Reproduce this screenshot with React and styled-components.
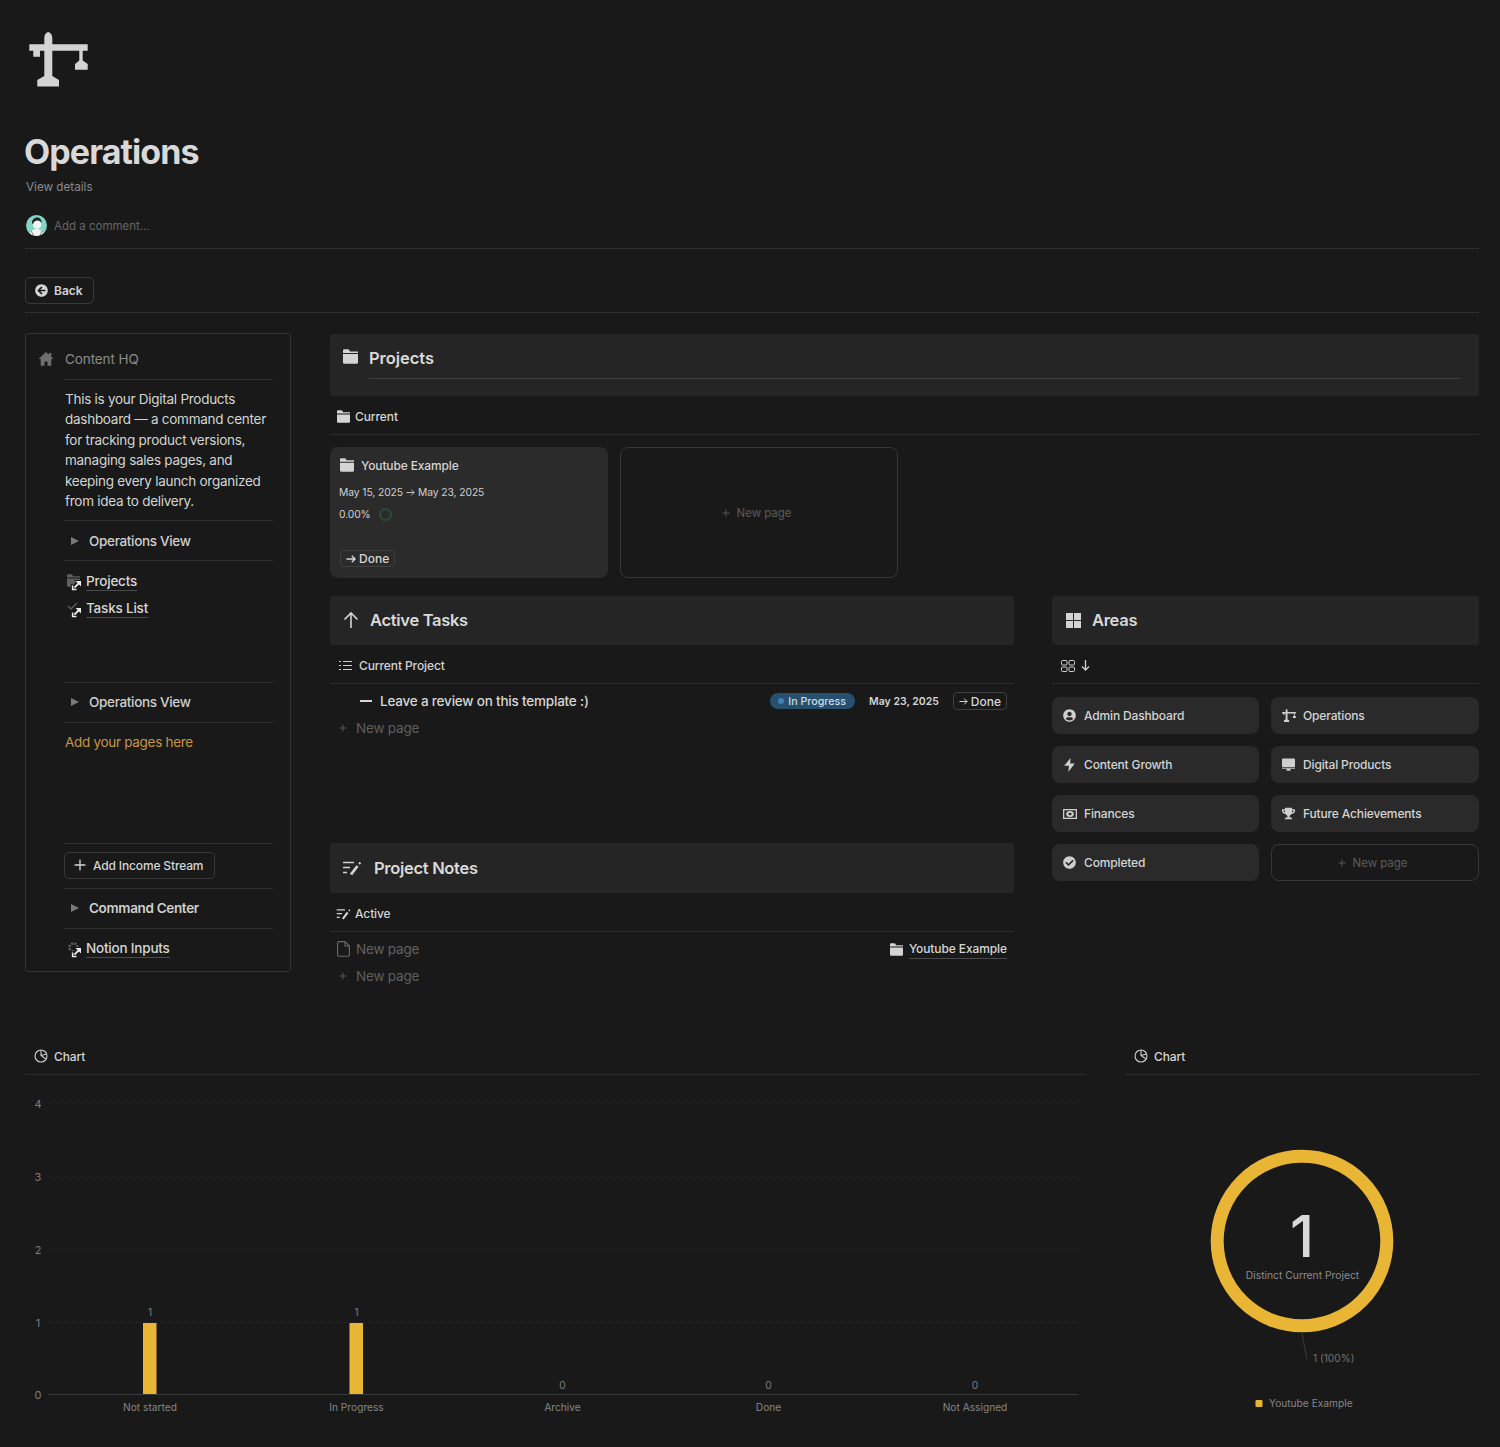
import React from "react";
import styled, { createGlobalStyle } from "styled-components";
import { FaUserCircle, FaTrophy, FaCheckCircle, FaArrowCircleLeft } from "react-icons/fa";

const GOLD = "#e8b534";
const Global = createGlobalStyle`
  html, body { margin: 0; padding: 0; background: #191919; }
  body { font-family: Inter, "Liberation Sans", sans-serif; color: #d4d4d4; -webkit-font-smoothing: antialiased; }
  * { box-sizing: border-box; }
`;

const Page = styled.div`height: 1447px; padding: 32px 21px 0 25px; overflow: hidden;`;
const Crane = styled.svg`display: block; margin-left: ${p => p.$ml ?? 4}px; width: ${p => p.$w || 59}px; height: ${p => p.$h || 55}px; fill: ${p => p.$c || "#d3d3d3"}; flex: none;`;
const Title = styled.h1`margin: 44px 0 0 -1px; font-size: 34px; line-height: 42px; font-weight: 700; color: #d9d9d9; letter-spacing: -0.9px;`;
const Details = styled.div`margin: 6px 0 0 1px; font-size: 11.7px; line-height: 16px; color: #8b8b8b;`;
const CommentRow = styled.div`display: flex; align-items: center; gap: 7px; height: 24px; margin: 18px 0 0 1px; font-size: 11.5px; color: #666;`;
const CommentText = styled.span`margin-top: 2px;`;
const Rule = styled.div`height: 1px; background: #2f2f2f; margin-top: ${p => p.$t}px;`;
const BackButton = styled.div`
  display: flex; align-items: center; gap: 6px; width: 69px; height: 27px; margin-top: 28px; padding-left: 9px;
  border: 1px solid #383838; border-radius: 5px; font-size: 12px; font-weight: 600; color: #d4d4d4;
`;
const Body = styled.div`display: grid; grid-template-columns: 266px 1149px; column-gap: 39px; margin-top: 20px;`;

const Sidebar = styled.aside`height: 639px; padding: 0 17px 0 38px; border: 1px solid #343434; border-radius: 3px;`;
const SideHead = styled.div`display: flex; align-items: center; height: 45px; margin-left: -26px; gap: 11px; font-size: 13.5px; letter-spacing: -0.1px; color: #8b8b8b; padding-top: 4px;`;
const SideSection = styled.div`
  height: ${p => p.$h}px; border-top: 1px solid #2f2f2f;
  display: flex; flex-direction: column; justify-content: ${p => p.$top ? "flex-start" : "center"};
  padding-top: ${p => p.$pt || 0}px; padding-bottom: ${p => p.$pb || 0}px;
`;
const SideText = styled.p`margin: 0; padding-left: 1px; font-size: 13.5px; line-height: 20.4px; color: #d4d4d4; letter-spacing: -0.27px;`;
const Toggle = styled.div`display: flex; align-items: center; gap: 10px; padding-left: 7px; font-size: 13.5px; font-weight: ${p => p.$strong ? 600 : 500}; color: #cfcfcf; letter-spacing: -0.33px;`;
const Caret = styled.span`width: 0; height: 0; border-left: 8px solid #7a7a7a; border-top: 4.5px solid transparent; border-bottom: 4.5px solid transparent;`;
const Linked = styled.div`display: flex; align-items: center; height: 27px; gap: 3px; padding-left: 3px; font-size: 13.5px; font-weight: 500; color: #d6d6d6; letter-spacing: -0.2px;`;
const LinkIcon = styled.span`position: relative; display: block; width: 16px; height: 16px; flex: none; color: #5f5f5f;`;
const LinkBadge = styled.svg`position: absolute; right: 1px; bottom: -1px; width: 11px; height: 11px;`;
const Under = styled.span`border-bottom: 1px solid #4a4a4a; line-height: 18px;`;
const Accent = styled.div`padding-left: 1px; font-size: 13.5px; color: #c8953f; letter-spacing: -0.3px;`;
const AddButton = styled.div`
  display: flex; align-items: center; gap: 7px; width: 151px; height: 27px; padding-left: 9px;
  border: 1px solid #383838; border-radius: 5px; font-size: 12px; font-weight: 500; letter-spacing: -0.15px; color: #d4d4d4;
`;

const Main = styled.main`padding-top: 1px; min-width: 0;`;
const Banner = styled.div`display: flex; height: ${p => p.$h}px; padding: 0 18px ${p => p.$pb || 0}px ${p => p.$pl || 13}px; background: #252525; border-radius: 3px; gap: ${p => p.$gap || 11}px; align-items: ${p => p.$top ? "flex-start" : "center"};`;
const BannerTitle = styled.h2`margin: 0; font-size: 16.5px; font-weight: 600; color: #d9d9d9; letter-spacing: -0.3px;`;
const ProjectsTitle = styled(BannerTitle)`letter-spacing: -0.05px;`;
const BannerColumn = styled.div`flex: 1; height: 45px; display: flex; align-items: center; padding-top: 3px; border-bottom: 1px solid #3d3d3d;`;
const BannerIcon = styled.span`display: flex; flex: none; height: 45px; align-items: center; color: #d4d4d4;`;
const TabBar = styled.div`
  display: flex; align-items: center; gap: ${p => p.$gap || 5}px; height: 39px; padding: ${p => p.$pt ?? 3}px 0 0 ${p => p.$pl || 7}px;
  border-bottom: 1px solid #2c2c2c; font-size: 12px; font-weight: 500; letter-spacing: -0.1px; color: #d4d4d4;
`;
const Cards = styled.div`display: flex; gap: 12px; margin-top: 12px;`;
const ProjectCard = styled.div`
  width: 278px; height: 131px; padding: 9px 9px 11px; background: #2b2b2b; border-radius: 8px;
  display: flex; flex-direction: column; align-items: flex-start;
`;
const CardTitle = styled.div`display: flex; align-items: center; gap: 7px; height: 18px; padding-left: 1px; font-size: 12px; font-weight: 500; letter-spacing: -0.13px; color: #d4d4d4;`;
const CardLine = styled.div`display: flex; align-items: center; gap: ${p => p.$gap}px; margin-top: ${p => p.$t}px; font-size: 10.3px; letter-spacing: -0.08px; line-height: 16px; color: #d0d0d0;`;
const Ring = styled.span`width: 13px; height: 13px; border: 2.5px solid #2d4a39; border-radius: 50%;`;
const DoneTag = styled.div`
  display: flex; align-items: center; gap: 3px; height: ${p => p.$h || 17}px; padding: 0 5px; margin-top: ${p => p.$auto ? "auto" : 0};
  margin-left: ${p => p.$auto ? "1px" : 0}; border: 1px solid #3f3f3f; border-radius: 4px; font-size: 12px; font-weight: 500; color: #d6d6d6; flex: none;
`;
const GhostCard = styled.div`
  width: ${p => p.$w ? p.$w + "px" : "auto"}; height: ${p => p.$h}px; display: flex; align-items: center; justify-content: center; gap: 7px; padding: 1px 5px 0 0;
  border: 1px solid #373737; border-radius: 8px; font-size: 11.5px; letter-spacing: -0.05px; color: #5b5b5b;
`;
const Split = styled.div`display: grid; grid-template-columns: 684px 427px; column-gap: 38px; margin-top: 18px;`;
const LeftStack = styled.div`height: 247px;`;
const TaskRow = styled.div`display: flex; align-items: center; height: 35px; padding: 0 7px 1px 30px; font-size: 13.5px; font-weight: 500; color: #d6d6d6;`;
const Dash = styled.span`width: 12px; height: 2px; background: #d6d6d6; margin-right: 8px; flex: none;`;
const TaskName = styled.span`flex: 1; letter-spacing: -0.2px;`;
const Pill = styled.span`display: flex; align-items: center; gap: 4px; height: 16px; padding: 0 9px 0 8px; border-radius: 8px; background: #27506f; font-size: 10.7px; font-weight: 500; color: #cfdce6;`;
const Dot = styled.span`width: 6px; height: 6px; border-radius: 50%; background: #3d82b5;`;
const DateText = styled.span`margin: 0 14px; font-size: 10.5px; font-weight: 600; color: #d4d4d4;`;
const NewRow = styled.div`display: flex; align-items: center; gap: 9px; height: 18px; padding-left: 9px; font-size: 13.5px; letter-spacing: -0.2px; color: #5f5f5f;`;
const NoteRow = styled.div`display: flex; align-items: center; justify-content: space-between; height: 35px; padding: 0 7px 1px;`;
const NoteStart = styled.div`display: flex; align-items: center; gap: 6px; font-size: 13.5px; letter-spacing: -0.2px; color: #626262;`;
const NoteEnd = styled.div`display: flex; align-items: center; gap: 6px; font-size: 12px; font-weight: 500; letter-spacing: -0.1px; color: #d6d6d6;`;
const AreaGrid = styled.div`display: grid; grid-template-columns: 207px 208px; gap: 12px; margin-top: 13px;`;
const AreaCard = styled.div`display: flex; align-items: center; gap: 8px; height: 37px; padding-left: 11px; background: #2a2a2a; border-radius: 8px; font-size: 12px; font-weight: 500; letter-spacing: -0.15px; color: #d4d4d4;`;
const AreaIcon = styled.span`display: flex; justify-content: center; width: 13px; flex: none; color: #cfcfcf;`;
const Charts = styled.div`display: grid; grid-template-columns: 1061px 354px; column-gap: 39px; margin-top: 51px;`;
const ChartPanel = styled.section`min-width: 0;`;
const ChartSvg = styled.svg`display: block; width: 100%; height: 350px; font-family: Inter, "Liberation Sans", sans-serif;`;

const Folder = ({ s = 15, c = "#d4d4d4" }) => (
  <svg width={s} height={s} viewBox="1.5 2 13 12.600" fill={c} style={{ flex: "none" }}><path d="M1.500 3.200C1.500 2.500 2 2 2.700 2h3.200c.4 0 .7.2.9.500L7.600 4H14.500v1.200H1.500z"/><path d="M1.500 6.200h13v7c0 .9-.6 1.400-1.400 1.400H2.900c-.8 0-1.400-.5-1.400-1.400z"/></svg>
);
const Home = () => (
  <svg width="16" height="16" viewBox="0 0 16 16" fill="#6f6f6f"><path d="M8 1 .5 8h2.200v6.800h3.800v-4.300h3v4.300h3.800V8h2.200l-2.200-2.100V2h-2.400v1.700z"/></svg>
);
const CranePath = "M44.300 44.300V38Q44.500 33 48.200 32 52 33 52.300 38V44.300H87.700V50.700H82.700V60.500L87.700 64V69.700H75V64L79.300 60.500V50.700H52.300V76L59 80V86.500H37.300V80L44.300 76V50.700H40V56.700H33.300V50.700H29.300V44.300Z";
const Plus = ({ s = 10, c = "#5f5f5f", w = 1 }) => (
  <svg width={s} height={s} viewBox="0 0 10 10" stroke={c} strokeWidth={w} style={{ flex: "none" }}><path d="M5 .5v9M.5 5h9"/></svg>
);
const Arrow = ({ s = 10, c = "#d6d6d6", w = 1.400 }) => (
  <svg width={s} height={s} viewBox="0 0 10 10" fill="none" stroke={c} strokeWidth={w} style={{ flex: "none" }}><path d="M.5 5h8.500M5.800 1.800 9 5 5.800 8.200"/></svg>
);
const Notes = ({ s = 20, c = "#d4d4d4" }) => (
  <svg width={s} height={s * 0.8} viewBox="0 0 20 16" fill="none" stroke={c} strokeWidth="1.700" style={{ flex: "none" }}><path d="M1 2.500h11M1 7.500h7M1 12.500h4"/><path d="M9 14.500 15.500 6" strokeWidth="2.800"/><path d="M17 2.500l1.500 1.500" strokeWidth="2"/></svg>
);
const Pie = () => (
  <svg width="14" height="14" viewBox="0 0 14 14" fill="none" stroke="#cfcfcf" strokeWidth="1.100" style={{ flex: "none" }}><circle cx="7" cy="7" r="6"/><path d="M7 1v5.500l4.600 3.200M7 6.500 12.600 5"/></svg>
);
const Badge = () => (
  <LinkBadge viewBox="0 0 11 11"><path d="M0 4v7h7V9.500L8 9l1 1 2-2V0H3l2 2-3 3L1 4z" fill="#191919"/><path d="M1.600 5.500v3.900h3.900" fill="none" stroke="#ececec" strokeWidth="1.500"/><path d="M3.400 7.600 8 3" fill="none" stroke="#ececec" strokeWidth="1.800"/><path d="M4.500 1h5.500v5.500z" fill="#ececec"/></LinkBadge>
);
const Avatar = () => (
  <svg width="21" height="21" viewBox="0 0 21 21" style={{ flex: "none" }}><defs><clipPath id="av"><circle cx="10.500" cy="10.500" r="10.500"/></clipPath></defs><g clipPath="url(#av)"><rect width="21" height="21" fill="#7fd6c6"/><path d="M3 21c.5-5 4-7 7.500-7s7 2 7.500 7z" fill="#f2f2f2"/><circle cx="11" cy="9.500" r="4.300" fill="#f4f4f4"/><path d="M6 8c0-4 3-5.500 5.500-5.500S16 5 15.500 8c-1-2-3-2.500-4.500-2.500S7.500 6.500 7 9.500z" fill="#222"/><path d="M5 16l3 5M16 16l-2 5" stroke="#333" strokeWidth=".6"/></g></svg>
);
const Squares = () => (
  <svg width="15" height="15" viewBox="0 0 15 15" fill="#d4d4d4" style={{ flex: "none" }}><rect width="7" height="7"/><rect x="8" width="7" height="7"/><rect y="8" width="7" height="7"/><rect x="8" y="8" width="7" height="7"/></svg>
);
const ListIcon = () => (
  <svg width="13" height="11" viewBox="0 0 13 11" fill="none" stroke="#cfcfcf" strokeWidth="1.100"><path d="M0 1.500h2M0 5.500h2M0 9.500h2M4 1.500h9M4 5.500h9M4 9.500h9"/></svg>
);
const FileIcon = () => (
  <svg width="13" height="16" viewBox="0 0 13 16" fill="none" stroke="#6a6a6a" strokeWidth="1.100"><path d="M1.800.6H8L12.400 5v8.500c0 1-.7 1.800-1.700 1.800H2.300c-1 0-1.700-.8-1.700-1.800V2c0-.8.500-1.400 1.200-1.400zM8 .6V5h4.400"/></svg>
);
const OutlineGrid = () => (
  <svg width="14" height="12" viewBox="0 0 14 12" fill="none" stroke="#cfcfcf" strokeWidth="1"><rect x=".5" y=".5" width="5.500" height="4.500" rx="1"/><rect x="8" y=".5" width="5.500" height="4.500" rx="1"/><rect x=".5" y="7" width="5.500" height="4.500" rx="1"/><rect x="8" y="7" width="5.500" height="4.500" rx="1"/></svg>
);
const Monitor = () => (
  <svg width="13" height="13" viewBox="0 0 13 13" fill="#cfcfcf" style={{ flex: "none" }}><rect y=".5" width="13" height="8.500" rx=".8"/><rect y="9.700" width="13" height="1"/><rect x="4.500" y="10.700" width="4" height="2"/></svg>
);
const Bolt = () => (
  <svg width="11" height="14" viewBox="0 0 11 14" fill="#cfcfcf" style={{ flex: "none" }}><path d="M6.500 0 .2 7.800H5L4.300 14 10.800 5.500H6.200z"/></svg>
);
const Bill = () => (
  <svg width="14" height="10" viewBox="0 0 14 10" fill="none" style={{ flex: "none" }}><rect width="14" height="10" fill="#cfcfcf"/><rect x="1.300" y="1.300" width="11.400" height="7.400" fill="#2a2a2a"/><ellipse cx="7" cy="5" rx="3.800" ry="3" fill="#cfcfcf"/><ellipse cx="7" cy="5" rx="1.600" ry="1.300" fill="#2a2a2a"/></svg>
);

const areas = [
  ["Admin Dashboard", <FaUserCircle size={13} />],
  ["Operations", <Crane viewBox="29 32 59 55" $w={14} $h={13} $c="#cfcfcf" $ml={0}><path d={CranePath} /></Crane>],
  ["Content Growth", <Bolt />],
  ["Digital Products", <Monitor />],
  ["Finances", <Bill />],
  ["Future Achievements", <FaTrophy size={13} />],
  ["Completed", <FaCheckCircle size={13} />],
];

const Y0 = 1075;
const yTicks = [[4, 1103], [3, 1176], [2, 1249], [1, 1322]];
const cats = [["Not started", 125, 1], ["In Progress", 331.500, 1], ["Archive", 537.500, 0], ["Done", 743.500, 0], ["Not Assigned", 950, 0]];

const BarChart = () => (
  <ChartSvg viewBox="0 0 1061 350">
    {yTicks.map(([n, y]) => (
      <g key={n}>
        <line x1="23" x2="1053" y1={y - Y0 + .5} y2={y - Y0 + .5} stroke="#2f2f2f" strokeDasharray="1 3" />
        <text x="13" y={y - Y0 + 4.500} fontSize="11" fill="#7d7d7d" textAnchor="middle">{n}</text>
      </g>
    ))}
    <text x="13" y={319 + 4.500} fontSize="11" fill="#7d7d7d" textAnchor="middle">0</text>
    <line x1="23" x2="1053" y1="319.500" y2="319.500" stroke="#3a3a3a" />
    {cats.map(([name, x, v]) => (
      <g key={name}>
        {v > 0 && <rect x={x - 7} y="248" width="13.500" height="71" fill={GOLD} />}
        <text x={x} y={v > 0 ? 241 : 314} fontSize="10.200" fill="#7d7d7d" textAnchor="middle">{v}</text>
        <text x={x} y="336" fontSize="10.200" fill="#858585" textAnchor="middle">{name}</text>
      </g>
    ))}
  </ChartSvg>
);

const Donut = () => (
  <ChartSvg viewBox="0 0 354 350">
    <circle cx="177" cy="166" r="84.800" fill="none" stroke={GOLD} strokeWidth="13" />
    <text x="177" y="182" fontSize="58" fontWeight="500" fill="#d9d9d9" textAnchor="middle">1</text>
    <text x="177.500" y="204" fontSize="10.300" fill="#8b8b8b" textAnchor="middle">Distinct Current Project</text>
    <path d="M177 258 182 284" stroke="#3d3d3d" fill="none" />
    <text x="188" y="287" fontSize="10.200" fill="#717171">1 (100%)</text>
    <rect x="130.500" y="325" width="7" height="7" rx="1" fill={GOLD} />
    <text x="144" y="332" fontSize="10.200" fill="#858585">Youtube Example</text>
  </ChartSvg>
);

export default function App() {
  return (
    <Page>
      <Global />
      <Crane viewBox="29 32 59 55"><path d={CranePath} /></Crane>
      <Title>Operations</Title>
      <Details>View details</Details>
      <CommentRow><Avatar /><CommentText>Add a comment...</CommentText></CommentRow>
      <Rule $t={11} />
      <BackButton><FaArrowCircleLeft size={13} />Back</BackButton>
      <Rule $t={8} />
      <Body>
        <Sidebar>
          <SideHead><Home />Content HQ</SideHead>
          <SideSection $h={141} $top $pt={9}>
            <SideText>This is your Digital Products dashboard — a command center for tracking product versions, managing sales pages, and keeping every launch organized from idea to delivery.</SideText>
          </SideSection>
          <SideSection $h={40}><Toggle><Caret />Operations View</Toggle></SideSection>
          <SideSection $h={122} $top $pt={7}>
            <Linked><LinkIcon><Folder s={13} c="#5f5f5f" /><Badge /></LinkIcon><Under>Projects</Under></Linked>
            <Linked><LinkIcon><svg width="14" height="14" viewBox="0 0 14 14" fill="none" stroke="#5f5f5f" strokeWidth="1.400"><path d="M1 5l3 3 6-6" /></svg><Badge /></LinkIcon><Under>Tasks List</Under></Linked>
          </SideSection>
          <SideSection $h={40} $pb={1}><Toggle><Caret />Operations View</Toggle></SideSection>
          <SideSection $h={121} $top $pt={11}><Accent>Add your pages here</Accent></SideSection>
          <SideSection $h={45} $pb={2}><AddButton><Plus s={12} c="#d4d4d4" w={1.100} />Add Income Stream</AddButton></SideSection>
          <SideSection $h={40} $pb={1}><Toggle $strong><Caret />Command Center</Toggle></SideSection>
          <SideSection $h={43} $top $pt={6}>
            <Linked><LinkIcon><svg width="14" height="14" viewBox="0 0 14 14" fill="none" stroke="#5f5f5f" strokeWidth="2.600" strokeDasharray="2 1.200"><circle cx="6.500" cy="6.500" r="4" /></svg><Badge /></LinkIcon><Under>Notion Inputs</Under></Linked>
          </SideSection>
        </Sidebar>
        <Main>
          <Banner $h={62} $top>
            <BannerIcon><Folder s={15} /></BannerIcon>
            <BannerColumn><ProjectsTitle>Projects</ProjectsTitle></BannerColumn>
          </Banner>
          <TabBar><Folder s={13} />Current</TabBar>
          <Cards>
            <ProjectCard>
              <CardTitle><Folder s={14} />Youtube Example</CardTitle>
              <CardLine $t={10} $gap={3}>May 15, 2025 <Arrow s={9} w={1} c="#d0d0d0" /> May 23, 2025</CardLine>
              <CardLine $t={6} $gap={8}>0.00%<Ring /></CardLine>
              <DoneTag $auto><Arrow />Done</DoneTag>
            </ProjectCard>
            <GhostCard $w={278} $h={131}><Plus s={8} />New page</GhostCard>
          </Cards>
          <Split>
            <div>
              <LeftStack>
                <Banner $h={49} $gap={11} $pb={1}>
                  <svg width="16" height="18" viewBox="0 0 16 18" fill="none" stroke="#d4d4d4" strokeWidth="1.600" style={{ flex: "none" }}><path d="M8 17V2M1.500 8.500 8 2l6.500 6.500" /></svg>
                  <BannerTitle>Active Tasks</BannerTitle>
                </Banner>
                <TabBar $pl={9} $gap={7}><ListIcon />Current Project</TabBar>
                <TaskRow>
                  <Dash /><TaskName>Leave a review on this template :)</TaskName>
                  <Pill><Dot />In Progress</Pill>
                  <DateText>May 23, 2025</DateText>
                  <DoneTag $h={18}><Arrow s={9} w={1.100} />Done</DoneTag>
                </TaskRow>
                <NewRow><Plus s={8} />New page</NewRow>
              </LeftStack>
              <Banner $h={50} $pl={12} $gap={12}>
                <Notes />
                <BannerTitle>Project Notes</BannerTitle>
              </Banner>
              <TabBar $pl={6} $gap={4}><Notes s={15} />Active</TabBar>
              <NoteRow>
                <NoteStart><FileIcon />New page</NoteStart>
                <NoteEnd><Folder s={13} /><Under>Youtube Example</Under></NoteEnd>
              </NoteRow>
              <NewRow><Plus s={8} />New page</NewRow>
            </div>
            <div>
              <Banner $h={49} $pl={14} $gap={11} $pb={1}><Squares /><BannerTitle>Areas</BannerTitle></Banner>
              <TabBar $pl={9} $gap={6}><OutlineGrid /><svg width="9" height="11" viewBox="0 0 9 11" fill="none" stroke="#cfcfcf" strokeWidth="1.300"><path d="M4.500 0v10M1 6.500 4.500 10 8 6.500" /></svg></TabBar>
              <AreaGrid>
                {areas.map(([name, icon]) => (
                  <AreaCard key={name}><AreaIcon>{icon}</AreaIcon>{name}</AreaCard>
                ))}
                <GhostCard $h={37}><Plus s={8} />New page</GhostCard>
              </AreaGrid>
            </div>
          </Split>
        </Main>
      </Body>
      <Charts>
        <ChartPanel>
          <TabBar $pl={9} $gap={6} $pt={2}><Pie />Chart</TabBar>
          <BarChart />
        </ChartPanel>
        <ChartPanel>
          <TabBar $pl={9} $gap={6} $pt={2}><Pie />Chart</TabBar>
          <Donut />
        </ChartPanel>
      </Charts>
    </Page>
  );
}
